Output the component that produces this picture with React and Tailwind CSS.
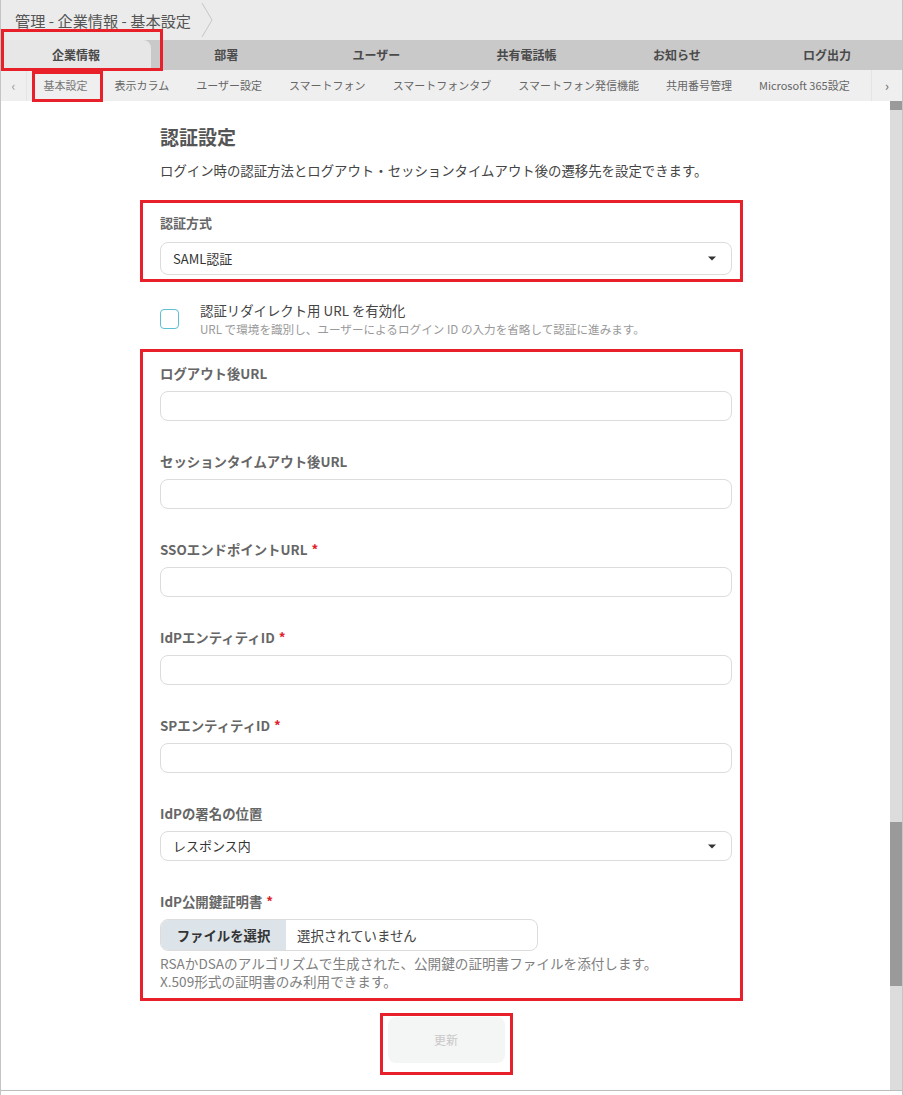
import React from 'react';

const mainTabs = ['企業情報', '部署', 'ユーザー', '共有電話帳', 'お知らせ', 'ログ出力'];
const subTabs = ['基本設定', '表示カラム', 'ユーザー設定', 'スマートフォン', 'スマートフォンタブ', 'スマートフォン発信機能', '共用番号管理', 'Microsoft 365設定'];

const Caret = () => (
    <svg width="8" height="5" viewBox="0 0 8 5" className="fill-[#333]">
        <path d="M0 0.5h8L4 4.5z" />
    </svg>
);

const Field = ({ label, required, children }) => (
    <div className="mt-[31px] first:mt-0">
        <p className="h-[18px] leading-[18px] text-[13.4px] font-bold text-[#666]">
            {label}
            {required && <span className="ml-1 text-[#e0202a]">*</span>}
        </p>
        <div className="mt-[9px]">{children}</div>
    </div>
);

const TextInput = () => (
    <div className="h-[30px] rounded-[8px] border border-[#dcdcdc] bg-white" />
);

const Select = ({ value, tall }) => (
    <div className={`flex items-center justify-between rounded-[8px] border border-[#dcdcdc] bg-white pl-[12px] pr-[15px] text-[13px] text-[#333] ${tall ? 'h-[33px]' : 'h-[30px]'}`}>
        <span>{value}</span>
        <Caret />
    </div>
);

const App = () => {
    return (
        <div className="relative w-[903px] h-[1095px] overflow-hidden bg-white border-x border-[#c4c4c4] font-['Noto_Sans_CJK_JP','Noto_Sans',sans-serif]">
            {/* breadcrumb */}
            <div className="flex h-[40px] items-center bg-[#ebebeb] pl-[14px]">
                <span className="text-[15.2px] text-[#555]">管理 - 企業情報 - 基本設定</span>
                <svg width="14" height="40" viewBox="0 0 14 40" className="ml-[9px]">
                    <polyline points="2,3 12,20 2,37" fill="none" stroke="#c6c6c6" strokeWidth="1" />
                </svg>
            </div>

            {/* main tabs */}
            <div className="flex h-[30px] bg-[#c9c9c9]">
                {mainTabs.map((t, i) => (
                    <div key={t}
                         className={`flex flex-1 items-center justify-center text-[12px] font-bold text-[#4a4a4a] ${i === 0 ? 'rounded-tr-[8px] bg-[#e7e7e7]' : ''}`}>
                        {t}
                    </div>
                ))}
            </div>

            {/* sub tabs */}
            <div className="flex h-[31px] items-center bg-[#efefef] text-[11px] text-[#666]">
                <div className="flex h-full w-[26px] items-center justify-center border-r border-[#e4e4e4] text-[13px] text-[#999]">‹</div>
                <div className="flex flex-1 items-center pl-[3px]">
                    {subTabs.map((t, i) => (
                        <div key={t} className={`px-[13.5px] whitespace-nowrap ${i === 0 ? 'text-[#777]' : ''}`}>{t}</div>
                    ))}
                </div>
                <div className="flex h-full w-[31px] items-center justify-center border-l border-[#e4e4e4] text-[13px] text-[#666]">›</div>
            </div>

            {/* body */}
            <div className="flex h-[990px] border-b border-[#bdbdbd]">
                <div className="flex-1">
                    <div className="ml-[159px] w-[572px] pt-[22px]">
                        <h2 className="text-[19px] leading-[28px] font-bold text-[#555]">認証設定</h2>
                        <p className="mt-[9px] text-[13.4px] leading-[20px] text-[#444]">
                            ログイン時の認証方法とログアウト・セッションタイムアウト後の遷移先を設定できます。
                        </p>

                        <div className="mt-[34px]">
                            <p className="h-[18px] leading-[18px] text-[13px] font-bold text-[#666]">認証方式</p>
                            <div className="mt-[10px]">
                                <Select value="SAML認証" tall />
                            </div>
                        </div>

                        <div className="mt-[26px] flex items-start">
                            <div className="mt-[8px] h-[20px] w-[19px] rounded-[4px] border-[1.5px] border-[#5dbfd1] bg-white" />
                            <div className="ml-[21px]">
                                <p className="text-[13.4px] leading-[19px] text-[#444]">認証リダイレクト用 URL を有効化</p>
                                <p className="text-[11.6px] leading-[18px] text-[#999]">URL で環境を識別し、ユーザーによるログイン ID の入力を省略して認証に進みます。</p>
                            </div>
                        </div>

                        <div className="mt-[26px]">
                            <Field label="ログアウト後URL"><TextInput /></Field>
                            <Field label="セッションタイムアウト後URL"><TextInput /></Field>
                            <Field label="SSOエンドポイントURL" required><TextInput /></Field>
                            <Field label="IdPエンティティID" required><TextInput /></Field>
                            <Field label="SPエンティティID" required><TextInput /></Field>
                            <Field label="IdPの署名の位置"><Select value="レスポンス内" /></Field>
                            <Field label="IdP公開鍵証明書" required>
                                <div className="flex h-[32px] w-[378px] overflow-hidden rounded-[8px] border border-[#dcdcdc] text-[13.4px]">
                                    <div className="flex w-[125px] items-center justify-center bg-[#dde4e9] font-bold text-[#333]">ファイルを選択</div>
                                    <div className="flex items-center pl-[11px] text-[#444]">選択されていません</div>
                                </div>
                            </Field>
                            <div className="mt-[3px] text-[13.6px] leading-[18px] text-[#808080]">
                                <p>RSAかDSAのアルゴリズムで生成された、公開鍵の証明書ファイルを添付します。</p>
                                <p>X.509形式の証明書のみ利用できます。</p>
                            </div>
                        </div>

                        <div className="mt-[27px] flex justify-center">
                            <button className="h-[46px] w-[117px] rounded-[8px] bg-[#f4f5f5] text-[12px] text-[#c8c8c8]">更新</button>
                        </div>
                    </div>
                </div>

                {/* scrollbar */}
                <div className="flex w-[12px] flex-col bg-[#dcdcdc]">
                    <div className="h-[9px] bg-[#9a9a9a]" />
                    <div className="h-[712px]" />
                    <div className="h-[164px] bg-[#9a9a9a]" />
                </div>
            </div>

            {/* annotation boxes */}
            <div className="absolute left-0 top-[29px] h-[42px] w-[162px] border-[3px] border-[#e8202a]" />
            <div className="absolute left-[31px] top-[71px] h-[31px] w-[71px] border-[3px] border-[#e8202a]" />
            <div className="absolute left-[139px] top-[200px] h-[82px] w-[603px] border-[3px] border-[#e8202a]" />
            <div className="absolute left-[139px] top-[349px] h-[652px] w-[603px] border-[3px] border-[#e8202a]" />
            <div className="absolute left-[379px] top-[1013px] h-[62px] w-[133px] border-[3px] border-[#e8202a]" />
        </div>
    );
};

export default App;
